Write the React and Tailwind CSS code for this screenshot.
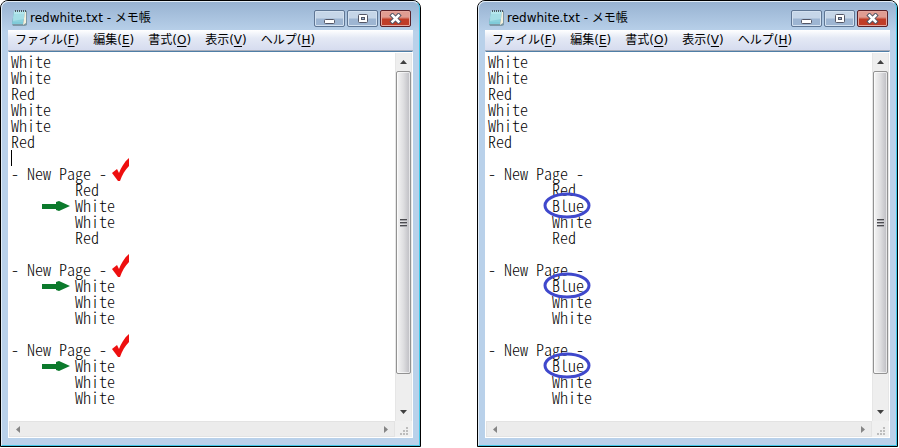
import { useState } from "react";

const LINE = 16;

const head = ["White", "White", "Red", "White", "White", "Red", ""];

const beforeText = [
  ...head,
  "- New Page -",
  "\tRed",
  "\tWhite",
  "\tWhite",
  "\tRed",
  "",
  "- New Page -",
  "\tWhite",
  "\tWhite",
  "\tWhite",
  "",
  "- New Page -",
  "\tWhite",
  "\tWhite",
  "\tWhite",
].join("\n");

const afterText = [
  ...head,
  "- New Page -",
  "\tRed",
  "\tBlue",
  "\tWhite",
  "\tRed",
  "",
  "- New Page -",
  "\tBlue",
  "\tWhite",
  "\tWhite",
  "",
  "- New Page -",
  "\tBlue",
  "\tWhite",
  "\tWhite",
].join("\n");

// rows are counted from the top of the text
const pageRows = [7, 13, 18];
const changedRows = [9, 14, 19];

const menus = [
  { label: "ファイル", hotkey: "F" },
  { label: "編集", hotkey: "E" },
  { label: "書式", hotkey: "O" },
  { label: "表示", hotkey: "V" },
  { label: "ヘルプ", hotkey: "H" },
];

function NotepadIcon() {
  return (
    <svg width="16" height="18" viewBox="0 0 16 18" className="shrink-0">
      <path d="M2 2H15V16L13 17H1L0 15Z" fill="#7d98a6" />
      <path d="M2 2H13L11 15H0Z" fill="#7fcbd9" />
      <path d="M2 2H13L12 10L1 12Z" fill="#b5e6ec" />
      <path d="M13 3H14V14L11 16Z" fill="#f4f1dc" />
      <path d="M2 6H12M2 8H12M1 10H12M1 12H11" stroke="#95d6e0" strokeWidth="1" />
      <path d="M3.5 1V3M5.5 1V3M7.5 1V3M9.5 1V3M11.5 1V3M13.5 1V3" stroke="#4c5a62" strokeWidth="1" />
    </svg>
  );
}

function CheckMark({ row }) {
  return (
    <svg
      width="18"
      height="24"
      viewBox="0 0 18 24"
      className="pointer-events-none absolute left-[103px]"
      style={{ top: row * LINE - 7 }}
    >
      <path d="M0 15L5 11L7 15C9 10 12 4 17 0V8C13 12 10 17 8 23H6Z" fill="#ee0f0f" />
    </svg>
  );
}

function Arrow({ row }) {
  return (
    <svg
      width="28"
      height="10"
      viewBox="0 0 28 10"
      className="pointer-events-none absolute left-[33px]"
      style={{ top: row * LINE + 4 }}
    >
      <path d="M0 3H14V1L17 0L28 5L17 10L14 9V8H0Z" fill="#0b7a2c" />
    </svg>
  );
}

function Circle({ row }) {
  return (
    <svg
      width="48"
      height="27"
      viewBox="0 0 48 27"
      className="pointer-events-none absolute left-[57px]"
      style={{ top: row * LINE - 5 }}
    >
      <ellipse cx="24" cy="13.5" rx="22" ry="11.5" fill="none" stroke="#3f48cc" strokeWidth="3" />
    </svg>
  );
}

function WindowButtons() {
  const base =
    "flex h-[17px] w-[31px] items-center justify-center rounded-xs border border-[#5f7694] bg-linear-to-b from-[#c6d6e8] from-45% to-[#9db5d2] to-55% inset-ring inset-ring-[#d3e1f0]";
  return (
    <div className="flex gap-0.5">
      <button aria-label="最小化" className={base}>
        <svg width="12" height="13" viewBox="0 0 12 13">
          <rect x="0.5" y="7.5" width="10" height="4" rx="1" fill="#fff" stroke="#535666" />
        </svg>
      </button>
      <button aria-label="最大化" className={base}>
        <svg width="12" height="13" viewBox="0 0 12 13">
          <rect x="1.5" y="2.5" width="9" height="8" rx="1" fill="#fff" stroke="#535666" />
          <rect x="4.5" y="5.5" width="3" height="2" fill="#9db5d2" stroke="#535666" />
        </svg>
      </button>
      <button
        aria-label="閉じる"
        className="flex h-[17px] w-[31px] items-center justify-center rounded-xs border border-[#5a2028] bg-linear-to-b from-[#e09c92] from-40% to-[#c03d28] to-55% inset-ring inset-ring-[#e5a79e]"
      >
        <svg width="13" height="11" viewBox="0 0 13 11">
          <path d="M3.5 2.5L9.5 8.5M9.5 2.5L3.5 8.5" stroke="#535666" strokeWidth="4.5" strokeLinecap="square" />
          <path d="M3.5 2.5L9.5 8.5M9.5 2.5L3.5 8.5" stroke="#fff" strokeWidth="2.5" strokeLinecap="square" />
        </svg>
      </button>
    </div>
  );
}

function VerticalScroll() {
  return (
    <div className="flex w-[17px] shrink-0 flex-col border-x border-[#e6e6e6] bg-[#eeeeee]">
      <button aria-label="上へ" className="flex h-[18px] items-center justify-center">
        <svg width="7" height="4" viewBox="0 0 7 4">
          <path d="M3.5 0L7 4H0Z" fill="#404040" />
        </svg>
      </button>
      <div className="flex h-[303px] flex-col items-center justify-center gap-px rounded-xs border border-[#929292] bg-linear-to-r from-[#f5f5f5] via-[#dedee0] to-[#bdbdc2] inset-ring inset-ring-white/60">
        <div className="h-0.5 w-[7px] border-t border-[#4c4c50] bg-[#a5a5aa]" />
        <div className="h-0.5 w-[7px] border-t border-[#4c4c50] bg-[#a5a5aa]" />
        <div className="h-0.5 w-[7px] border-t border-[#4c4c50] bg-[#a5a5aa]" />
      </div>
      <div className="grow" />
      <button aria-label="下へ" className="flex h-[18px] items-center justify-center">
        <svg width="7" height="4" viewBox="0 0 7 4">
          <path d="M0 0H7L3.5 4Z" fill="#404040" />
        </svg>
      </button>
    </div>
  );
}

function HorizontalScroll() {
  return (
    <div className="flex h-4 bg-[#f0f0f0]">
      <div className="flex grow items-center justify-between border border-[#e3e3e3] bg-[#ececec] px-1.5">
        <button aria-label="左へ">
          <svg width="4" height="7" viewBox="0 0 4 7" className="block">
            <path d="M4 0V7L0 3.5Z" fill="#858585" />
          </svg>
        </button>
        <button aria-label="右へ">
          <svg width="4" height="7" viewBox="0 0 4 7" className="block">
            <path d="M0 0V7L4 3.5Z" fill="#858585" />
          </svg>
        </button>
      </div>
      <div className="flex w-[17px] items-end justify-end p-1 pb-0.5">
        <svg width="8" height="8" viewBox="0 0 8 8">
          <path
            d="M6 0h2v2h-2zM3 3h2v2h-2zM6 3h2v2h-2zM0 6h2v2h-2zM3 6h2v2h-2zM6 6h2v2h-2z"
            fill="#bdbdbd"
          />
        </svg>
      </div>
    </div>
  );
}

function Notepad({ text, children }) {
  const [value, setValue] = useState(text);

  return (
    <section className="min-w-0 flex-1 rounded-t-lg border border-black bg-[#b9d1ea]">
      <div className="rounded-t-[7px] border border-[#e2edf7] border-r-[#41c8e8] border-b-[#41c8e8] bg-linear-to-b from-[#98b3d2] to-[#b9d1ea] to-[30px] px-1.5 pb-[7px]">
        <header className="flex h-7 items-center justify-between">
          <h1 className="flex items-center gap-0.5 pt-1 pl-1 font-['DejaVu_Sans','Noto_Sans_CJK_JP',sans-serif] text-[12px] leading-4 text-black">
            <NotepadIcon />
            redwhite.txt - メモ帳
          </h1>
          <div className="pt-1 pr-0.5">
            <WindowButtons />
          </div>
        </header>

        <nav className="flex h-[21px] items-center gap-3.5 border-b border-[#a8adba] bg-linear-to-b from-white via-[#e4e9f5] via-40% to-[#d6dcef] pl-[7px] font-['DejaVu_Sans','Noto_Sans_CJK_JP',sans-serif] text-[12px] leading-4 text-black">
          {menus.map((m) => (
            <button key={m.hotkey} className="whitespace-nowrap">
              {m.label}(<span className="underline underline-offset-2">{m.hotkey}</span>)
            </button>
          ))}
        </nav>

        <div className="border border-white border-t-[#4f7ea6] bg-white">
          <div className="flex pt-px">
            <div className="relative min-w-0 grow">
              <textarea
                aria-label="redwhite.txt"
                value={value}
                onChange={(e) => setValue(e.target.value)}
                rows={23}
                spellCheck={false}
                wrap="off"
                className="block w-full resize-none overflow-hidden bg-white pl-0.5 font-['Noto_Sans_CJK_JP',monospace] text-[16px] leading-4 font-light text-black outline-none [font-feature-settings:'hwid'] [tab-size:64px]"
              />
              {children}
            </div>
            <VerticalScroll />
          </div>
          <HorizontalScroll />
        </div>
      </div>
    </section>
  );
}

export default function App() {
  return (
    <main className="flex items-start gap-14 bg-white pr-px">
      <Notepad text={beforeText}>
        <div className="absolute top-[97px] left-0.5 h-4 w-px bg-black" />
        {pageRows.map((row) => (
          <CheckMark key={row} row={row} />
        ))}
        {changedRows.map((row) => (
          <Arrow key={row} row={row} />
        ))}
      </Notepad>
      <Notepad text={afterText}>
        {changedRows.map((row) => (
          <Circle key={row} row={row} />
        ))}
      </Notepad>
    </main>
  );
}
